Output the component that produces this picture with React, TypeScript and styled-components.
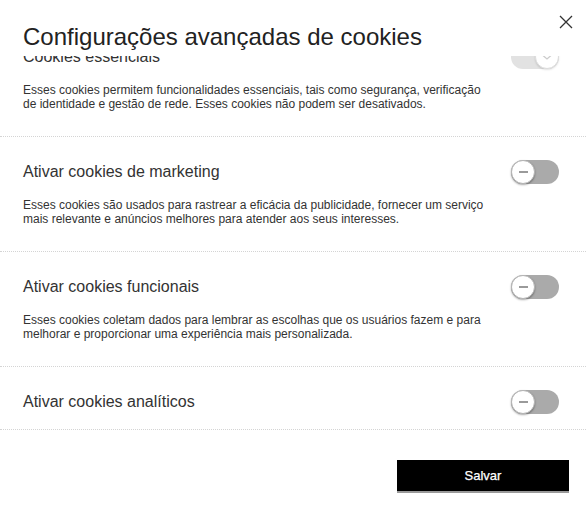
import React, { useLayoutEffect, useRef } from "react";
import styled, { createGlobalStyle } from "styled-components";

const Global = createGlobalStyle`
  html, body { margin: 0; padding: 0; background: #fff; }
  body { font-family: "Liberation Sans", Arial, sans-serif; }
  * { box-sizing: border-box; }
`;

const Modal = styled.div`
  width: 586px;
  height: 512px;
  display: flex;
  flex-direction: column;
  background: #fff;
  overflow: hidden;
`;

const Header = styled.div`
  height: 56px;
  display: flex;
  justify-content: space-between;
  align-items: flex-start;
  padding: 15px 13px 0 23px;
`;

const Title = styled.h2`
  margin: 8px 0 0;
  font-size: 24px;
  line-height: 28px;
  font-weight: normal;
  color: #222;
`;

const CloseButton = styled.button`
  width: 14px;
  height: 14px;
  padding: 0;
  border: none;
  background: none;
  display: flex;
  cursor: pointer;
`;

const Scroller = styled.div`
  height: 374px;
  overflow-y: scroll;
  border-bottom: 1px dotted #d4d4d4;
  &::-webkit-scrollbar { width: 4px; }
  &::-webkit-scrollbar-track { background: #ececec; }
  &::-webkit-scrollbar-thumb {
    background: #c1c1c1;
    border-left: 1px solid #ececec;
    background-clip: padding-box;
  }
`;

const List = styled.div`
  padding: 24px 0 20px;
`;

const Section = styled.section`
  padding: 25px 27px 25px 23px;
  border-bottom: 1px dotted #d4d4d4;
`;

const Row = styled.div`
  display: flex;
  justify-content: space-between;
  align-items: center;
  height: 20px;
  margin-bottom: 16px;
`;

const SectionTitle = styled.h3`
  margin: 0;
  font-size: 16px;
  line-height: 20px;
  font-weight: normal;
  color: #333;
`;

const Desc = styled.p`
  margin: 0;
  max-width: 466px;
  font-size: 12px;
  line-height: 14px;
  color: #333;
`;

const Toggle = styled.span<{ $on?: boolean; $disabled?: boolean }>`
  position: relative;
  width: 48px;
  height: 24px;
  border-radius: 12px;
  background: ${(p) => (p.$disabled ? "#e2e2e2" : "#aaa")};
  flex: none;
`;

const Knob = styled.span<{ $on?: boolean; $disabled?: boolean }>`
  position: absolute;
  top: 0;
  left: ${(p) => (p.$on ? "24px" : "0")};
  width: 24px;
  height: 24px;
  border-radius: 50%;
  background: #fff;
  border: 1px solid ${(p) => (p.$disabled ? "#ddd" : "#b5b5b5")};
  box-shadow: 0 1px 2px rgba(0, 0, 0, ${(p) => (p.$disabled ? 0.12 : 0.35)});
  display: flex;
  align-items: center;
  justify-content: center;
`;

const Minus = styled.span`
  width: 9px;
  height: 2px;
  background: #9a9a9a;
`;

const Footer = styled.div`
  flex: 1;
  display: flex;
  justify-content: flex-end;
  align-items: flex-start;
  padding: 30px 17px 0 0;
`;

const SaveButton = styled.button`
  width: 172px;
  height: 33px;
  background: #000;
  color: #fff;
  border: none;
  border-bottom: 2px solid #9a9a9a;
  font-family: "Liberation Sans", Arial, sans-serif;
  font-size: 13px;
  cursor: pointer;
  -webkit-text-stroke: 0.25px #fff;
`;

type Item = { title: string; desc: string; on?: boolean; disabled?: boolean };

const items: Item[] = [
  {
    title: "Cookies essenciais",
    desc: "Esses cookies permitem funcionalidades essenciais, tais como segurança, verificação de identidade e gestão de rede. Esses cookies não podem ser desativados.",
    on: true,
    disabled: true,
  },
  {
    title: "Ativar cookies de marketing",
    desc: "Esses cookies são usados para rastrear a eficácia da publicidade, fornecer um serviço mais relevante e anúncios melhores para atender aos seus interesses.",
  },
  {
    title: "Ativar cookies funcionais",
    desc: "Esses cookies coletam dados para lembrar as escolhas que os usuários fazem e para melhorar e proporcionar uma experiência mais personalizada.",
  },
  {
    title: "Ativar cookies analíticos",
    desc: "Esses cookies nos ajudam a entender como os visitantes interagem com o nosso site, descobrir erros e fornecer uma análise geral melhor.",
  },
];

function Switch({ on, disabled }: { on?: boolean; disabled?: boolean }) {
  return (
    <Toggle $on={on} $disabled={disabled}>
      <Knob $on={on} $disabled={disabled}>
        {on ? (
          <svg width="10" height="8" viewBox="0 0 10 8">
            <path d="M1 2.5 L5 6 L9 2.5" fill="none" stroke="#ccc" strokeWidth="1.3" />
          </svg>
        ) : (
          <Minus />
        )}
      </Knob>
    </Toggle>
  );
}

export default function App() {
  const ref = useRef<HTMLDivElement>(null);
  useLayoutEffect(() => {
    if (ref.current) ref.current.scrollTop = 58;
  }, []);
  return (
    <Modal>
      <Global />
      <Header>
        <Title>Configurações avançadas de cookies</Title>
        <CloseButton aria-label="Fechar">
          <svg width="14" height="14" viewBox="0 0 14 14">
            <path d="M1 1 L13 13 M13 1 L1 13" stroke="#333" strokeWidth="1.3" fill="none" />
          </svg>
        </CloseButton>
      </Header>
      <Scroller ref={ref}>
        <List>
          {items.map((it) => (
            <Section key={it.title}>
              <Row>
                <SectionTitle>{it.title}</SectionTitle>
                <Switch on={it.on} disabled={it.disabled} />
              </Row>
              <Desc>{it.desc}</Desc>
            </Section>
          ))}
        </List>
      </Scroller>
      <Footer>
        <SaveButton>Salvar</SaveButton>
      </Footer>
    </Modal>
  );
}
